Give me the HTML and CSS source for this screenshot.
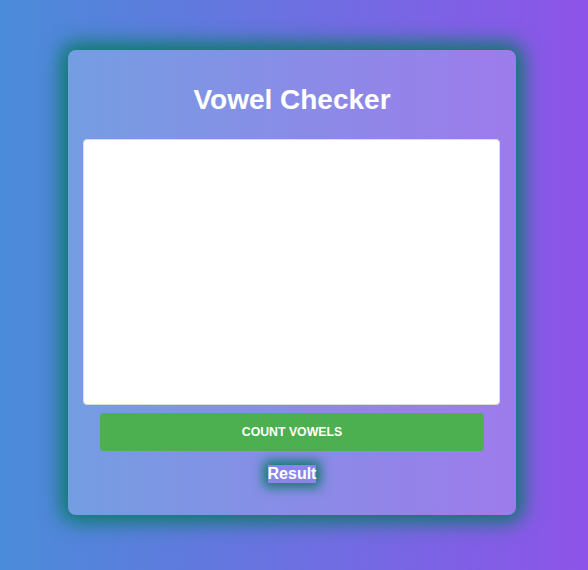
FILE: index.html
```html
<!DOCTYPE html>
<html lang="en">
<head>
<meta charset="UTF-8">
<title>Vowel Checker</title>
<link rel="stylesheet" href="styles.css">
</head>
<body>
  <div class="card">
    <h1 class="title">Vowel Checker</h1>
    <textarea class="input"></textarea>
    <button class="btn">COUNT VOWELS</button>
    <p class="result-row"><span class="result">Result</span></p>
  </div>
</body>
</html>
```
FILE: styles.css
```css
* { box-sizing: border-box; }
html, body { height: 100%; }
body {
  margin: 0;
  font-family: "Liberation Sans", Arial, sans-serif;
  background: linear-gradient(to right, #4a8cd9, #8e54e9);
  display: flex;
  align-items: center;
  justify-content: center;
}
.card {
  width: 448px;
  margin-left: -4px;
  margin-top: -5px;
  padding: 15px;
  border-radius: 8px;
  background: rgba(255, 255, 255, 0.2);
  box-shadow: 0 0 20px 7px #087a66;
  display: flex;
  flex-direction: column;
  align-items: center;
}
.title {
  margin: 19px 0 23px;
  font-size: 28px;
  line-height: 32px;
  font-weight: bold;
  color: #fff;
}
.input {
  display: block;
  align-self: flex-start;
  width: 417px;
  height: 266px;
  border: 1px solid #ddd;
  border-radius: 4px;
  background: #fff;
  resize: none;
  margin: 0;
}
.btn {
  display: block;
  margin-top: 8px;
  width: 384px;
  height: 38px;
  border: none;
  border-radius: 4px;
  background: #4caf50;
  color: #fff;
  font-family: "Liberation Sans", Arial, sans-serif;
  font-size: 12.3px;
  font-weight: bold;
}
.result-row {
  margin: 14px 0 17px;
  line-height: 18px;
}
.result {
  display: inline-block;
  font-size: 16px;
  font-weight: bold;
  color: #fff;
  line-height: 18px;
  background: rgba(140, 120, 240, 0.35);
  box-shadow: 0 0 12px 4px #087a66;
}
```
